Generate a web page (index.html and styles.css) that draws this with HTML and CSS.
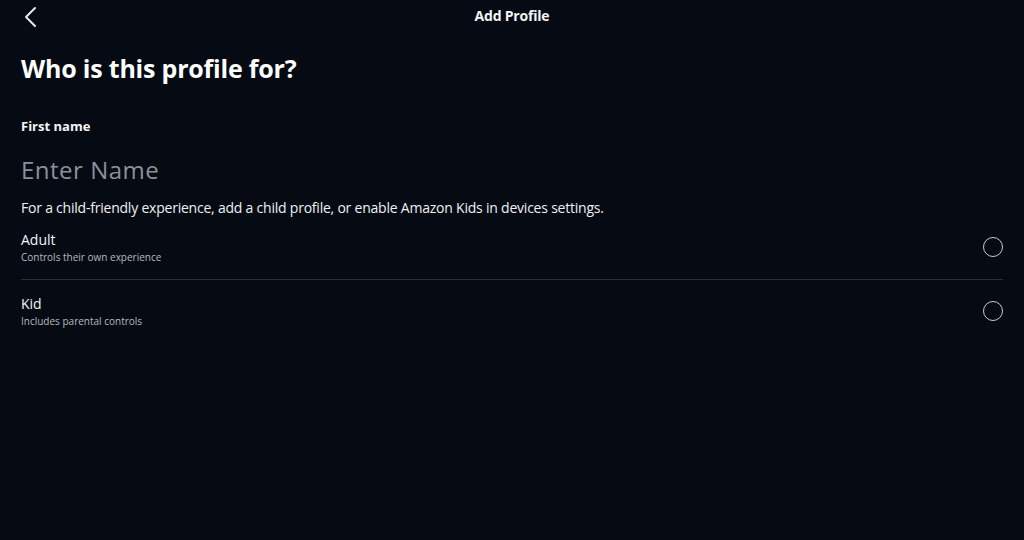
FILE: index.html
```html
<!DOCTYPE html>
<html lang="en">
<head>
<meta charset="utf-8">
<title>Add Profile</title>
<link rel="stylesheet" href="styles.css">
</head>
<body>
<header class="topbar">
  <button class="back" aria-label="Back">
    <svg width="14" height="22" viewBox="0 0 14 22"><path d="M12 2 L3 11 L12 20" fill="none" stroke="#e6e8eb" stroke-width="2" stroke-linecap="round" stroke-linejoin="round"/></svg>
  </button>
  <div class="title">Add Profile</div>
</header>
<main class="content">
  <h1 class="heading">Who is this profile for?</h1>
  <label class="label">First name</label>
  <div class="name-input">Enter Name</div>
  <p class="help">For a child-friendly experience, add a child profile, or enable Amazon Kids in devices settings.</p>
  <div class="options">
    <div class="option">
      <div class="opt-text">
        <div class="opt-title">Adult</div>
        <div class="opt-sub">Controls their own experience</div>
      </div>
      <span class="radio"></span>
    </div>
    <div class="option">
      <div class="opt-text">
        <div class="opt-title">Kid</div>
        <div class="opt-sub">Includes parental controls</div>
      </div>
      <span class="radio"></span>
    </div>
  </div>
</main>
</body>
</html>
```
FILE: styles.css
```css
* { box-sizing: border-box; }
html, body { margin: 0; padding: 0; }
body {
  background: #060b13;
  color: #ffffff;
  font-family: "Open Sans", "Noto Sans", sans-serif;
  width: 1024px;
  height: 540px;
  overflow: hidden;
}
.topbar {
  position: relative;
  height: 30px;
  display: flex;
  align-items: center;
  justify-content: center;
}
.back {
  position: absolute;
  left: 23px;
  top: 6px;
  background: none;
  border: 0;
  padding: 0;
  width: 14px;
  height: 22px;
}
.back svg { display: block; }
.title {
  font-size: 14px;
  line-height: 19px;
  font-weight: 700;
  letter-spacing: -0.2px;
  color: #f2f3f5;
}
.content {
  padding: 0 21px;
}
.heading {
  margin: 21px 0 0;
  font-size: 25px;
  font-weight: 700;
  line-height: 34px;
  letter-spacing: -0.2px;
  color: #fff;
}
.label {
  display: block;
  margin-top: 32px;
  font-size: 13px;
  font-weight: 700;
  line-height: 18px;
  color: #f4f5f7;
}
.name-input {
  margin-top: 19px;
  font-size: 24px;
  line-height: 32px;
  letter-spacing: 0.5px;
  color: #8b9199;
}
.help {
  margin: 12px 0 0;
  font-size: 14px;
  line-height: 20px;
  letter-spacing: -0.22px;
  color: #eef0f2;
}
.options { margin-top: -1px; }
.option {
  display: flex;
  align-items: center;
  justify-content: space-between;
  padding: 13px 0 15px;
}
.option + .option { border-top: 1px solid #2a2f37; padding-top: 14px; }
.opt-title {
  font-size: 14px;
  line-height: 20px;
  color: #f2f3f5;
}
.opt-sub {
  font-size: 10px;
  line-height: 14px;
  color: #b5b9bf;
}
.radio {
  width: 20px;
  height: 20px;
  border: 1.5px solid #c9ccd1;
  border-radius: 50%;
}
```
